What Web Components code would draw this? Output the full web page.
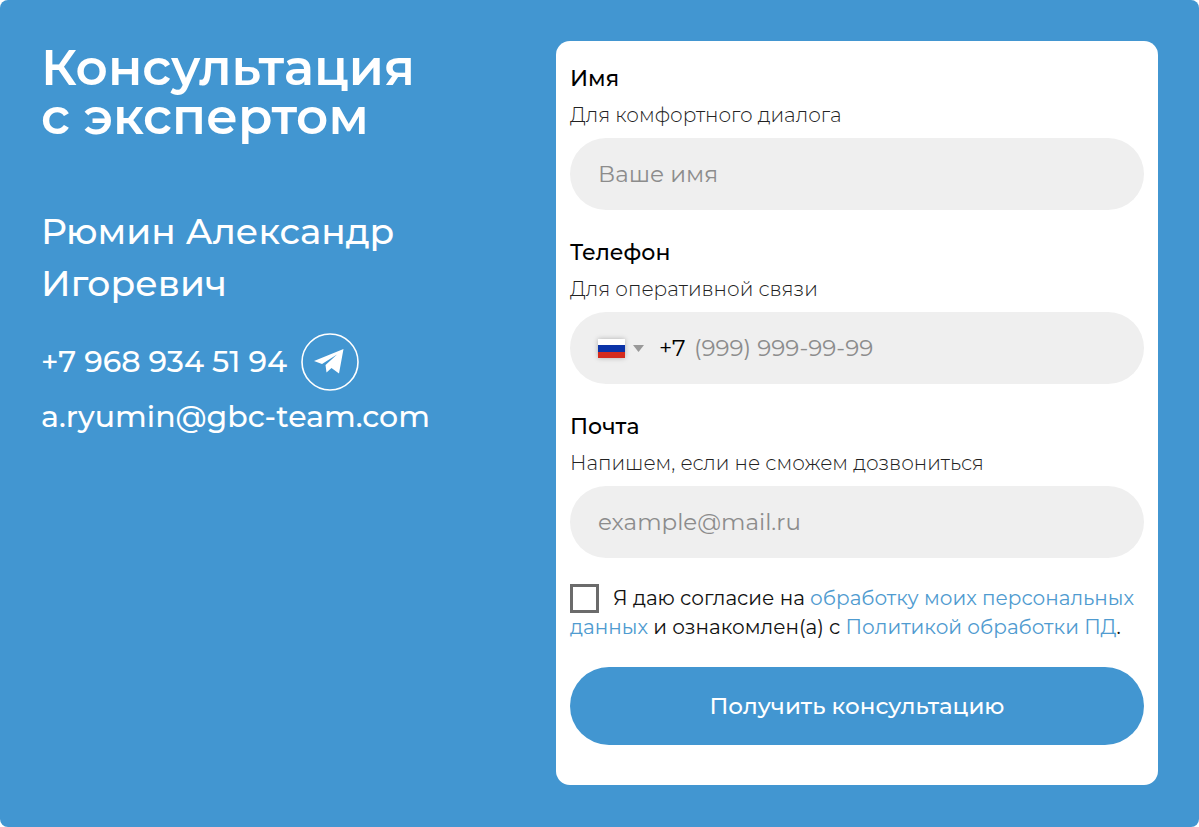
<!DOCTYPE html>
<html lang="ru">
<head>
<meta charset="utf-8">
<meta name="viewport" content="width=device-width, initial-scale=1">
<title>Консультация с экспертом</title>
<style>
  :root { --brand: #4296d1; --field: #efefef; }
  body { margin: 0; background: #fff; font-family: Montserrat, Inter, "Open Sans", sans-serif; }
</style>
</head>
<body>
<consult-section>
  <expert-card slot="expert" phone="+7 968 934 51 94" email="a.ryumin@gbc-team.com">
    <span slot="title">Консультация<br>с экспертом</span>
    Рюмин Александр Игоревич
  </expert-card>
  <consult-form slot="form">
    <form-field type="text" name="name" placeholder="Ваше имя">
      Имя<span slot="hint">Для комфортного диалога</span>
    </form-field>
    <form-field type="tel" name="phone" placeholder="(999) 999-99-99">
      Телефон<span slot="hint">Для оперативной связи</span>
      <country-select slot="prefix"></country-select>
    </form-field>
    <form-field type="email" name="email" placeholder="example@mail.ru">
      Почта<span slot="hint">Напишем, если не сможем дозвониться</span>
    </form-field>
    <consent-check slot="consent"></consent-check>
    <submit-button slot="submit">Получить консультацию</submit-button>
  </consult-form>
</consult-section>

<script>
const define = (name, html, setup) => {
  const template = document.createElement('template');
  template.innerHTML = html;
  customElements.define(name, class extends HTMLElement {
    constructor() {
      super();
      this.attachShadow({ mode: 'open' }).append(template.content.cloneNode(true));
    }
    connectedCallback() { if (setup) setup(this, this.shadowRoot); }
  });
};

define('consult-section', `
  <style>
    :host { display: block; }
    main {
      box-sizing: border-box; min-height: 100vh; padding: 41px;
      display: grid; grid-template-columns: 515fr 602fr; align-items: start;
      background: var(--brand); border-radius: 8px; color: #fff;
    }
    @media (max-width: 800px) { main { grid-template-columns: 1fr; gap: 32px; padding: 24px; } }
  </style>
  <main><slot name="expert"></slot><slot name="form"></slot></main>`);

define('expert-card', `
  <style>
    :host { display: block; padding-right: 64px; }
    h1 { margin: 2px 0 64px; font-size: 50px; line-height: 49px; font-weight: 600; }
    h2 { margin: 0 0 24px; font-size: 36px; line-height: 52px; font-weight: 500; }
    .row { display: flex; align-items: center; gap: 14px; }
    a { color: inherit; text-decoration: none; }
    .contact { font-size: 30px; line-height: 52px; font-weight: 500; }
    .tg { display: block; width: 58px; height: 58px; }
    svg { display: block; }
  </style>
  <h1><slot name="title"></slot></h1>
  <h2><slot></slot></h2>
  <div class="row">
    <a class="contact phone"></a>
    <a class="tg" href="#telegram" aria-label="Telegram">
      <svg width="58" height="58" viewBox="0 0 58 58" aria-hidden="true">
        <circle cx="29" cy="29" r="28" fill="none" stroke="#fff" stroke-width="1.6"/>
        <path d="M13 28 42.500 16 38 40.500 30.500 35 25.500 39.500 24.500 32 36 21.500 21 31Z" fill="#fff"/>
      </svg>
    </a>
  </div>
  <a class="contact mail"></a>`,
  (host, root) => {
    const phone = host.getAttribute('phone'), email = host.getAttribute('email');
    const p = root.querySelector('.phone'), m = root.querySelector('.mail');
    p.textContent = phone; p.href = 'tel:' + phone.replace(/ /g, '');
    m.textContent = email; m.href = 'mailto:' + email;
  });

define('consult-form', `
  <style>
    :host { display: block; }
    form { padding: 20px 14px 40px; background: #fff; border-radius: 14px; color: #000; }
    .fields { display: grid; gap: 25px; margin-bottom: 26px; }
    .consent { margin-bottom: 25px; }
  </style>
  <form>
    <div class="fields"><slot></slot></div>
    <div class="consent"><slot name="consent"></slot></div>
    <slot name="submit"></slot>
  </form>`);

define('form-field', `
  <style>
    :host { display: block; }
    label, .hint { display: block; line-height: 36px; }
    label { font-size: 22px; font-weight: 500; }
    .hint { font-size: 20px; font-weight: 300; color: #222; margin-bottom: 5px; }
    .box { display: flex; align-items: center; height: 72px; padding: 0 28px; box-sizing: border-box;
      background: var(--field); border-radius: 36px; }
    input { flex: 1; min-width: 0; height: 72px; padding: 0; border: 0; outline: 0; background: none;
      font: inherit; font-size: 23px; color: #000; }
    input::placeholder { color: #8c8c8c; opacity: 1; }
  </style>
  <label for="control"><slot></slot></label>
  <div class="hint" id="hint"><slot name="hint"></slot></div>
  <div class="box"><slot name="prefix"></slot><input id="control" aria-describedby="hint"></div>`,
  (host, root) => {
    const input = root.querySelector('input');
    for (const a of ['type', 'name', 'placeholder']) input.setAttribute(a, host.getAttribute(a));
  });

define('country-select', `
  <style>
    :host { display: grid; align-items: center; margin-right: 8px; }
    svg, select { grid-area: 1 / 1; }
    svg { pointer-events: none; z-index: 1; overflow: visible; }
    .flag { box-shadow: 0 0 5px #0004; }
    .arrow { margin-left: 35px; }
    select { appearance: none; border: 0; padding: 0 0 0 61px; background: none; outline: 0;
      font: inherit; font-size: 23px; line-height: 36px; color: #000; }
  </style>
  <svg class="flag" width="27" height="19" viewBox="0 0 27 19" aria-hidden="true">
    <path fill="#fff" d="M0 0h27v7H0z"/><path fill="#0b33a8" d="M0 6h27v7H0z"/><path fill="#d52b1e" d="M0 13h27v6H0z"/>
  </svg>
  <svg class="arrow" width="11" height="7" viewBox="0 0 11 7" aria-hidden="true"><path fill="#999" d="M0 0h11L5.500 7z"/></svg>
  <select aria-label="Код страны"><option>+7</option></select>`);

define('consent-check', `
  <style>
    :host { display: block; font-size: 20px; line-height: 29px; color: #111; }
    input { appearance: none; box-sizing: border-box; width: 29px; height: 29px; margin: 0 14px 0 0;
      border: 3px solid #6b6b6b; background: #fff; vertical-align: top; }
    input:checked { background: var(--brand); }
    a { color: #4f9bd0; text-decoration: none; }
  </style>
  <input type="checkbox" id="agree"><label for="agree">Я даю согласие на <a href="#consent">обработку моих персональных данных</a> и ознакомлен(а) с <a href="#policy">Политикой обработки ПД</a>.</label>`);

define('submit-button', `
  <style>
    :host { display: block; }
    button { display: block; width: 100%; height: 78px; border: 0; border-radius: 39px; cursor: pointer;
      background: var(--brand); color: #fff; font: inherit; font-size: 23px; font-weight: 500; }
  </style>
  <button type="submit"><slot></slot></button>`);
</script>
</body>
</html>
